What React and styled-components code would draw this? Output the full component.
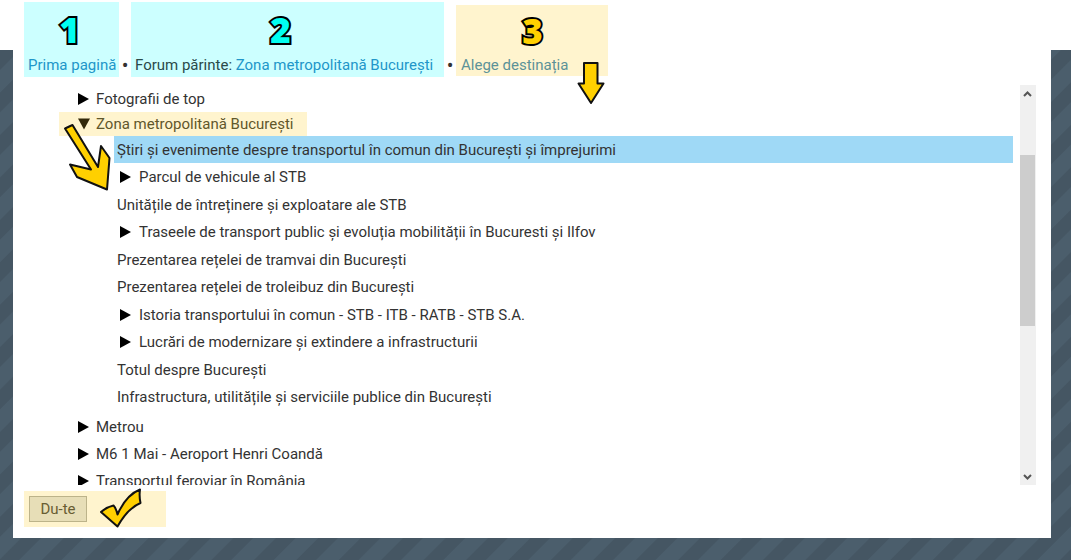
import React, { useState } from "react";
import styled, { createGlobalStyle, css } from "styled-components";

const GlobalStyle = createGlobalStyle`
  *, *::before, *::after { box-sizing: border-box; }
  body {
    margin: 0;
    font-family: Roboto, "Liberation Sans", sans-serif;
    font-size: 15px;
    line-height: 18px;
    color: #333;
  }
  button { font: inherit; color: inherit; }
`;

const Page = styled.div`
  min-height: 100vh;
  padding: 0 20px 22px 13px;
  background-image:
    linear-gradient(#fff, #fff),
    repeating-linear-gradient(135deg, #4b5e6c 0 5px, #455663 6px 19px, #4b5e6c 20px 30px);
  background-size: 100% 50px, auto;
  background-repeat: no-repeat, repeat;
`;

const Panel = styled.main`
  display: flow-root;
  padding: 2px 15px 11px 11px;
  background: #fff;
`;

const Breadcrumb = styled.nav`
  display: flex;
  height: 75px;
`;

const Step = styled.div`
  position: relative;
  display: flex;
  flex-direction: column;
  align-items: center;
  justify-content: space-between;
  flex: none;
  width: ${(p) => p.$width}px;
  padding: 8px 4px 3px;
  background: #cff;
  color: #2a4a4a;
  white-space: nowrap;

  ${(p) =>
    p.$target &&
    css`
      height: 71px;
      margin-top: 3px;
      padding: 6px 4px 2px 5px;
      background: #fff4ce;
    `}
`;

const StepNumber = styled.span`
  padding-right: ${(p) => (p.$wide ? 14 : 4)}px;
  font-family: "Open Sans", "Noto Sans", sans-serif;
  font-size: 35px;
  font-weight: 800;
  line-height: 40px;
  color: ${(p) => (p.$gold ? "#ffd000" : "#00fff0")};
  -webkit-text-stroke: 4px #000;
  paint-order: stroke fill;

  ${(p) => p.$gold && css`padding-right: 0;`}
`;

const StepText = styled.span`
  align-self: flex-start;
`;

const Link = styled.a`
  color: ${(p) => (p.$muted ? "#5c9298" : "#2196c9")};
  text-decoration: none;
`;

const Separator = styled.span`
  display: flex;
  align-items: flex-end;
  justify-content: center;
  flex: none;
  width: 12px;
  padding-bottom: 3px;
  font-size: 20px;
`;

const Drawing = styled.svg`
  position: absolute;
  left: ${(p) => p.$left}px;
  top: ${(p) => p.$top}px;
  z-index: 1;
  fill: #ffd000;
  stroke: #111;
  stroke-width: 2;
  stroke-linejoin: round;
  pointer-events: none;
`;

const Browser = styled.div`
  display: flex;
  gap: 7px;
  height: 400px;
  margin: 8px 0 6px 35px;
`;

const Viewport = styled.div`
  flex: 1;
  min-width: 0;
  overflow: hidden;
`;

const List = styled.ul`
  margin: 0;
  padding: 0;
  list-style: none;
`;

const SubList = styled(List)`
  margin-left: 55px;
  padding-bottom: 2px;

  > li:nth-child(even) { padding-bottom: 1px; }
`;

const Row = styled.div`
  position: relative;
  display: flex;
  align-items: center;
  height: 27px;
  padding-left: ${(p) => (p.$leaf ? 3 : p.$nested ? 6 : 19)}px;
  white-space: nowrap;
  background: ${(p) => (p.$selected ? "#9fd9f6" : "transparent")};

  ${(p) =>
    p.$marked &&
    css`
      width: 248px;
      height: 24px;
      background: #fff4ce;
      color: #61572b;
    `}
`;

const Toggle = styled.button`
  display: flex;
  width: 12px;
  margin-right: ${(p) => (p.$nested ? 7 : 6)}px;
  padding: 0;
  border: 0;
  background: none;
  color: ${(p) => (p.$open ? "#33290a" : "#000")};
`;

const Scrollbar = styled.div`
  display: flex;
  flex-direction: column;
  align-items: flex-start;
  width: 16px;
  background: #f0f0f0;
`;

const ScrollButton = styled.button`
  display: grid;
  place-items: center;
  width: 15px;
  height: 17px;
  padding: 0;
  border: 0;
  background: none;
  color: #555;
`;

const ScrollTrack = styled.div`
  flex: 1;
  width: 15px;
  padding-top: 53px;
`;

const ScrollThumb = styled.div`
  height: 171px;
  background: #cdcdcd;
`;

const Actions = styled.div`
  position: relative;
  width: 142px;
  padding: 5px;
  background: #fff4ce;
`;

const SubmitButton = styled.button`
  display: block;
  width: 58px;
  height: 26px;
  padding: 0;
  border: 1px solid #bcb38a;
  background: #e7deb7;
  color: #685d33;
`;

const forums = [
  { name: "Fotografii de top", group: true },
  {
    name: "Zona metropolitană București",
    group: true,
    children: [
      { name: "Știri și evenimente despre transportul în comun din București și împrejurimi" },
      { name: "Parcul de vehicule al STB", group: true },
      { name: "Unitățile de întreținere și exploatare ale STB" },
      { name: "Traseele de transport public și evoluția mobilității în Bucuresti și Ilfov", group: true },
      { name: "Prezentarea rețelei de tramvai din București" },
      { name: "Prezentarea rețelei de troleibuz din București" },
      { name: "Istoria transportului în comun - STB - ITB - RATB - STB S.A.", group: true },
      { name: "Lucrări de modernizare și extindere a infrastructurii", group: true },
      { name: "Totul despre București" },
      { name: "Infrastructura, utilitățile și serviciile publice din București" },
    ],
  },
  { name: "Metrou", group: true },
  { name: "M6 1 Mai - Aeroport Henri Coandă", group: true },
  { name: "Transportul feroviar în România", group: true },
];

function Triangle({ open }) {
  return (
    <svg width="12" height="12" viewBox="0 0 12 12" fill="currentColor" aria-hidden="true">
      <path d={open ? "M0 0.5H12L6 11.5Z" : "M0 0L11 6L0 12Z"} />
    </svg>
  );
}

function Forum({ item, nested, selected, onSelect }) {
  const [open, setOpen] = useState(Boolean(item.children));
  const marked = Boolean(item.children);
  return (
    <li>
      <Row
        $leaf={!item.group}
        $nested={nested}
        $marked={marked}
        $selected={selected === item.name}
        onClick={() => onSelect(item.name)}
      >
        {item.group && (
          <Toggle
            type="button"
            aria-label={item.name}
            aria-expanded={open}
            $nested={nested}
            $open={open}
            onClick={() => setOpen(!open)}
          >
            <Triangle open={open} />
          </Toggle>
        )}
        {item.name}
        {marked && (
          <Drawing $left={3} $top={10} width="50" height="72" viewBox="62 122 50 72" aria-hidden="true">
            <path d="M65 128.500L72.500 125L98 167L101 146L109.500 158L107 189.500L77 177L70 164.500L91 169.500Z" />
          </Drawing>
        )}
      </Row>
      {open && item.children && (
        <SubList>
          {item.children.map((child) => (
            <Forum key={child.name} item={child} nested selected={selected} onSelect={onSelect} />
          ))}
        </SubList>
      )}
    </li>
  );
}

export default function App() {
  const [selected, setSelected] = useState(forums[1].children[0].name);
  return (
    <Page>
      <GlobalStyle />
      <Panel>
        <Breadcrumb>
          <Step $width={95}>
            <StepNumber>1</StepNumber>
            <StepText><Link href="#home">Prima pagină</Link></StepText>
          </Step>
          <Separator>•</Separator>
          <Step $width={313}>
            <StepNumber $wide>2</StepNumber>
            <StepText>
              Forum părinte: <Link href="#parent">Zona metropolitană București</Link>
            </StepText>
          </Step>
          <Separator>•</Separator>
          <Step $width={152} $target>
            <StepNumber $gold>3</StepNumber>
            <StepText><Link href="#destination" $muted>Alege destinația</Link></StepText>
            <Drawing $left={120} $top={55} width="32" height="46" viewBox="576 60 32 46" aria-hidden="true">
              <path d="M584 63H597.500V83.500H603.500L591 103L578.500 83.500H584Z" />
            </Drawing>
          </Step>
        </Breadcrumb>
        <Browser>
          <Viewport>
            <List>
              {forums.map((item) => (
                <Forum key={item.name} item={item} selected={selected} onSelect={setSelected} />
              ))}
            </List>
          </Viewport>
          <Scrollbar>
            <ScrollButton type="button" aria-label="Sus">
              <svg width="9" height="6" viewBox="0 0 9 6" fill="none" stroke="currentColor" strokeWidth="2">
                <path d="M1 5L4.500 1.500L8 5" />
              </svg>
            </ScrollButton>
            <ScrollTrack><ScrollThumb /></ScrollTrack>
            <ScrollButton type="button" aria-label="Jos">
              <svg width="9" height="6" viewBox="0 0 9 6" fill="none" stroke="currentColor" strokeWidth="2">
                <path d="M1 1L4.500 4.500L8 1" />
              </svg>
            </ScrollButton>
          </Scrollbar>
        </Browser>
        <Actions>
          <SubmitButton type="button">Du-te</SubmitButton>
          <Drawing $left={74} $top={-4} width="46" height="42" viewBox="98 487 46 42" aria-hidden="true">
            <path d="M101 512Q107 507 113.500 505.500Q116 508 117.500 514.500Q126 495 140 489.500Q139 496 140.500 503Q128 508 117.500 526.500Q109 519 101 512Z" />
          </Drawing>
        </Actions>
      </Panel>
    </Page>
  );
}
